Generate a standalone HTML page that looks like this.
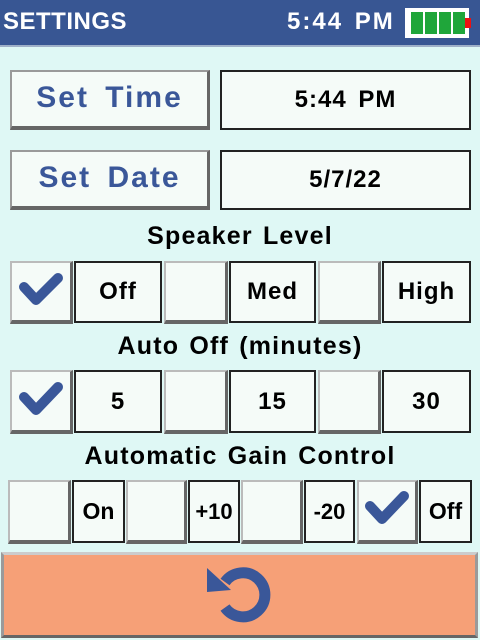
<!DOCTYPE html>
<html><head><meta charset="utf-8"><style>
*{margin:0;padding:0;box-sizing:border-box}
body{width:480px;height:640px;background:#dff8f5;font-family:"Liberation Sans",sans-serif;position:relative;overflow:hidden}
.hdr{position:absolute;left:0;top:0;width:480px;height:47px;background:#385693;border-bottom:2px solid #9fb0c8}
.hdr .t{position:absolute;left:3px;top:8px;color:#fff;font-weight:bold;font-size:24px;letter-spacing:.5px}
.hdr .tm{position:absolute;left:287px;top:8px;color:#fff;font-weight:bold;font-size:24px;letter-spacing:2px;word-spacing:3px}
.bat{position:absolute;left:405px;top:8px;width:64px;height:30px;background:#fff}
.bat i{position:absolute;top:4px;width:12px;height:22px;background:#1fa63a}
.a{position:absolute}
.btn{background:#f5fbf8;border:2px solid #9a9a9a;border-right-color:#666;border-bottom-color:#666;border-bottom-width:4px;border-right-width:3px;color:#3a5799;font-weight:bold;font-size:30px;text-align:center;letter-spacing:2px;word-spacing:6px}
.box{background:#f5fbf8;border:2px solid #222;font-weight:bold;color:#000;text-align:center;font-size:24px;letter-spacing:1px}
.cb{background:#f5fbf8;border:2px solid #bbb;border-right:3px solid #666;border-bottom:4px solid #666}
.lbl{position:absolute;left:0;width:480px;text-align:center;font-weight:bold;font-size:25px;color:#000;letter-spacing:1.2px;word-spacing:2px}
.s{font-size:22px;letter-spacing:0}
</style></head><body>
<div class="hdr"><div class="t">SETTINGS</div><div class="tm">5:44 PM</div>
<div class="bat"><i style="left:6px"></i><i style="left:20px"></i><i style="left:34px"></i><i style="left:48px"></i><b style="position:absolute;left:60px;top:10px;width:6px;height:10px;background:#e11"></b></div></div>

<div class="a btn" style="left:10px;top:70px;width:200px;height:60px;line-height:52px">Set Time</div>
<div class="a box" style="left:220px;top:70px;width:251px;height:60px;line-height:56px;word-spacing:4px">5:44 PM</div>
<div class="a btn" style="left:10px;top:150px;width:200px;height:60px;line-height:52px">Set Date</div>
<div class="a box" style="left:220px;top:150px;width:251px;height:60px;line-height:56px">5/7/22</div>

<div class="lbl" style="top:222px">Speaker Level</div>
<div class="lbl" style="top:332px">Auto Off (minutes)</div>
<div class="lbl" style="top:442px">Automatic Gain Control</div>

<!-- row1 -->
<div class="a cb" style="left:10px;top:261px;width:63px;height:63px"></div>
<div class="a box" style="left:74px;top:261px;width:88px;height:62px;line-height:58px">Off</div>
<div class="a cb" style="left:164px;top:261px;width:64px;height:63px"></div>
<div class="a box" style="left:229px;top:261px;width:87px;height:62px;line-height:58px">Med</div>
<div class="a cb" style="left:318px;top:261px;width:63px;height:63px"></div>
<div class="a box" style="left:382px;top:261px;width:89px;height:62px;line-height:58px">High</div>
<!-- row2 -->
<div class="a cb" style="left:10px;top:370px;width:63px;height:64px"></div>
<div class="a box" style="left:74px;top:370px;width:88px;height:63px;line-height:59px">5</div>
<div class="a cb" style="left:164px;top:370px;width:64px;height:64px"></div>
<div class="a box" style="left:229px;top:370px;width:87px;height:63px;line-height:59px">15</div>
<div class="a cb" style="left:318px;top:370px;width:63px;height:64px"></div>
<div class="a box" style="left:382px;top:370px;width:89px;height:63px;line-height:59px">30</div>
<!-- row3 -->
<div class="a cb" style="left:8px;top:480px;width:63px;height:64px"></div>
<div class="a box s" style="left:72px;top:480px;width:53px;height:63px;line-height:59px;font-size:23px">On</div>
<div class="a cb" style="left:126px;top:480px;width:61px;height:64px"></div>
<div class="a box s" style="left:188px;top:480px;width:52px;height:63px;line-height:59px">+10</div>
<div class="a cb" style="left:241px;top:480px;width:62px;height:64px"></div>
<div class="a box s" style="left:304px;top:480px;width:51px;height:63px;line-height:59px">-20</div>
<div class="a cb" style="left:357px;top:480px;width:61px;height:64px"></div>
<div class="a box s" style="left:419px;top:480px;width:53px;height:63px;line-height:59px;font-size:23px">Off</div>

<svg class="a" style="left:0;top:0" width="480" height="640">
<g fill="none" stroke="#3a5799" stroke-width="10" stroke-linecap="round" stroke-linejoin="round">
<path d="M24 287 L36 300 L58 278"/>
<path d="M24 397 L36 410 L58 387"/>
<path d="M370 506 L382 519 L404 496"/>
</g>
</svg>

<div class="a" style="left:1px;top:552px;width:477px;height:86px;background:#f6a077;border:3px solid #9a9a9a;border-top-color:#ccc;border-bottom-color:#666"></div>
<svg class="a" style="left:0;top:0" width="480" height="640">
<path d="M225 582 A22 22 0 1 1 225 607.6" fill="none" stroke="#3a5799" stroke-width="11"/>
<path d="M207 568 L207 592 L231 590 Z" fill="#3a5799"/>
</svg>
</body></html>
